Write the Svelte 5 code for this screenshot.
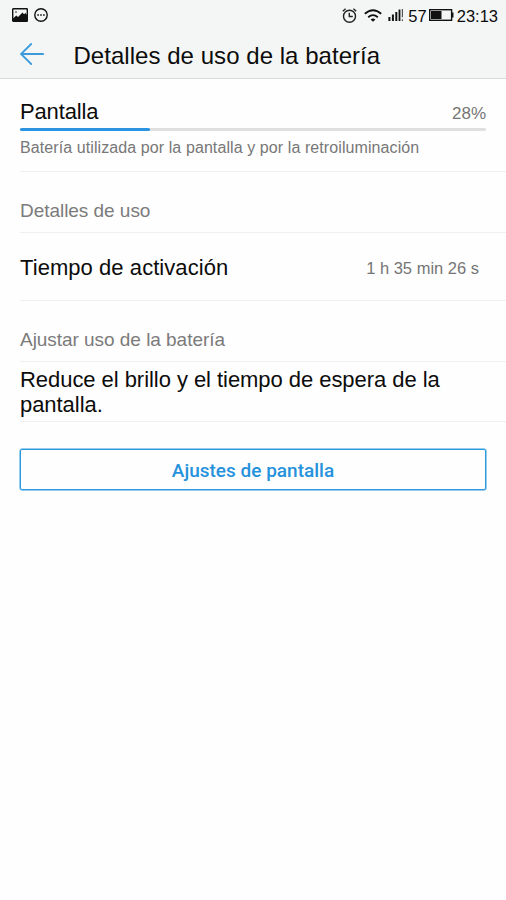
<script>
	const batteryLevel = 57
	const usage = {
		name: 'Pantalla',
		percent: 28,
		description: 'Batería utilizada por la pantalla y por la retroiluminación',
		activeTime: '1 h 35 min 26 s'
	}
</script>

<div class="screen">
	<header>
		<div class="status-bar">
			<div class="notifications">
				<svg width="16" height="14" viewBox="0 0 16 14">
					<rect x="0.7" y="0.7" width="14.6" height="12.6" rx="0.6" fill="none" stroke="#111" stroke-width="1.4" />
					<path d="M1 10.5L4.3 7.6L6 9L10.5 4.4L12 6.2L13.5 5L15 7V13H1Z" fill="#111" />
					<circle cx="4" cy="4" r="0.8" fill="#111" />
				</svg>
				<svg width="14" height="14" viewBox="0 0 14 14">
					<circle cx="7" cy="7" r="6.2" fill="none" stroke="#111" stroke-width="1.4" />
					<path d="M3.3 6.3h1.6v1.4H3.3zM6.2 6.3h1.6v1.4H6.2zM9.1 6.3h1.6v1.4H9.1z" fill="#111" />
				</svg>
			</div>
			<div class="system">
				<svg class="alarm" width="15" height="15" viewBox="0 0 15 15" fill="none" stroke="#222" stroke-width="1.4">
					<circle cx="7.5" cy="8.2" r="6" />
					<path d="M0.8 3.2L3.6 0.8M14.2 3.2L11.4 0.8M7.3 4.8V8.5H10.8" />
				</svg>
				<svg class="wifi" width="18" height="13" viewBox="0 0 18 13" fill="none" stroke="#111" stroke-width="1.8">
					<path d="M0.8 4.8Q9 -2.4 17.2 4.8" />
					<path d="M4.2 8.2Q9 4.1 13.8 8.2" />
					<path d="M6.6 10.4Q9 8.4 11.4 10.4L9 12.8Z" fill="#111" stroke="none" />
				</svg>
				<svg class="signal" width="15" height="12" viewBox="0 0 15 12" fill="#111">
					<path d="M0.4 8h2v4h-2zM3.9 5.5h2V12h-2zM7.3 3h2v9h-2zM10.6 0.5h1.8V12h-1.8z" />
					<path d="M13.8 0H15v8.2h-1.2zM13.8 10.2H15V12h-1.2z" fill="#555" />
				</svg>
				<span class="level">{batteryLevel}</span>
				<svg class="battery" width="25" height="12" viewBox="0 0 25 12">
					<rect x="0.7" y="0.7" width="21.9" height="10.6" fill="none" stroke="#111" stroke-width="1.4" />
					<rect x="2" y="2" width="10.5" height="8" fill="#111" />
					<path d="M23 3.5h1.5v5H23z" fill="#111" />
				</svg>
				<span class="clock">23:13</span>
			</div>
		</div>
		<div class="title-bar">
			<svg width="24" height="22" viewBox="0 0 24 22" fill="none" stroke="#3d9bdc" stroke-width="1.8" stroke-linecap="round">
				<path d="M11.2 1L1 11L11.2 21M1 11H23.2" />
			</svg>
			<h1>Detalles de uso de la batería</h1>
		</div>
	</header>

	<section class="summary">
		<div class="summary-head">
			<h2>{usage.name}</h2>
			<span class="value">{usage.percent}%</span>
		</div>
		<div class="track">
			<div class="fill" style="width: {usage.percent}%"></div>
		</div>
		<p>{usage.description}</p>
	</section>

	<h3>Detalles de uso</h3>
	<div class="row">
		<span class="label">Tiempo de activación</span>
		<span class="value">{usage.activeTime}</span>
	</div>

	<h3>Ajustar uso de la batería</h3>
	<p class="advice">Reduce el brillo y el tiempo de espera de la pantalla.</p>

	<button>Ajustes de pantalla</button>
</div>

<style>
	:global(body) {
		margin: 0;
		background: #fefefe;
	}

	.screen {
		display: flex;
		flex-direction: column;
		min-height: 900px;
		background: #fefefe;
		color: #0c0c0c;
		font-family: "Liberation Sans", Arial, sans-serif;
	}

	.screen * {
		box-sizing: border-box;
	}

	svg {
		display: block;
		flex: none;
	}

	h1, h2, h3, p {
		margin: 0;
		font-weight: 400;
	}

	header {
		height: 79px;
		background: #f4f6f5;
		border-bottom: 1px solid #d9dbda;
	}

	.status-bar {
		display: flex;
		justify-content: space-between;
		height: 30px;
		padding: 0 8px 0 12px;
	}

	.notifications, .system {
		display: flex;
		align-items: center;
	}

	.notifications {
		gap: 6px;
	}

	.system {
		font-size: 16.5px;
		line-height: 29px;
	}

	.wifi {
		margin-left: 7px;
	}

	.signal {
		margin-left: 6px;
		margin-right: 5px;
	}

	.level, .clock {
		padding-top: 2px;
	}

	.battery {
		margin: 0 3px 0 2px;
	}

	.title-bar {
		display: flex;
		align-items: center;
		height: 48px;
		padding-left: 20px;
	}

	h1 {
		margin-left: 29.5px;
		padding-top: 3px;
		font-size: 24px;
		letter-spacing: 0.04px;
	}

	.summary {
		height: 93px;
		margin-left: 20px;
		padding: 19px 20px 0 0;
		border-bottom: 1px solid #f0f0f0;
	}

	.summary-head {
		display: flex;
		align-items: baseline;
		justify-content: space-between;
		height: 30px;
		padding-top: 1px;
	}

	h2 {
		font-size: 22px;
		line-height: 26px;
		letter-spacing: -0.15px;
	}

	.value {
		color: #757575;
		font-size: 16.5px;
	}

	.summary .value {
		font-size: 17px;
	}

	.track {
		height: 3px;
		border-radius: 2px;
		background: #dfdfdf;
	}

	.fill {
		height: 3px;
		border-radius: 2px;
		background: #2b93e2;
	}

	.summary p {
		margin-top: 7px;
		color: #777;
		font-size: 16px;
		line-height: 20px;
		letter-spacing: 0.09px;
	}

	h3 {
		height: 61px;
		margin-left: 20px;
		padding-top: 28px;
		border-bottom: 1px solid #f0f0f0;
		color: #7b7b7b;
		font-size: 19px;
		line-height: 22px;
		letter-spacing: -0.04px;
	}

	.row {
		display: flex;
		align-items: center;
		justify-content: space-between;
		height: 68px;
		margin-left: 20px;
		padding-right: 27px;
		border-bottom: 1px solid #f0f0f0;
	}

	.row .value {
		padding-top: 3px;
	}

	.label {
		padding-top: 3px;
		font-size: 22px;
		letter-spacing: 0.06px;
	}

	.advice {
		height: 60px;
		margin-left: 20px;
		padding: 5px 40px 0 0;
		border-bottom: 1px solid #f0f0f0;
		font-size: 22px;
		line-height: 25px;
		letter-spacing: -0.05px;
	}

	button {
		height: 41px;
		margin: 27px 20px 0;
		padding: 2px 0 0;
		border: 1px solid #2f99de;
		border-radius: 2px;
		background: transparent;
		box-shadow: 0 0 0 0.5px #2f99de;
		color: #2792dc;
		font-family: Roboto, sans-serif;
		font-size: 19px;
		font-weight: 500;
	}
</style>
